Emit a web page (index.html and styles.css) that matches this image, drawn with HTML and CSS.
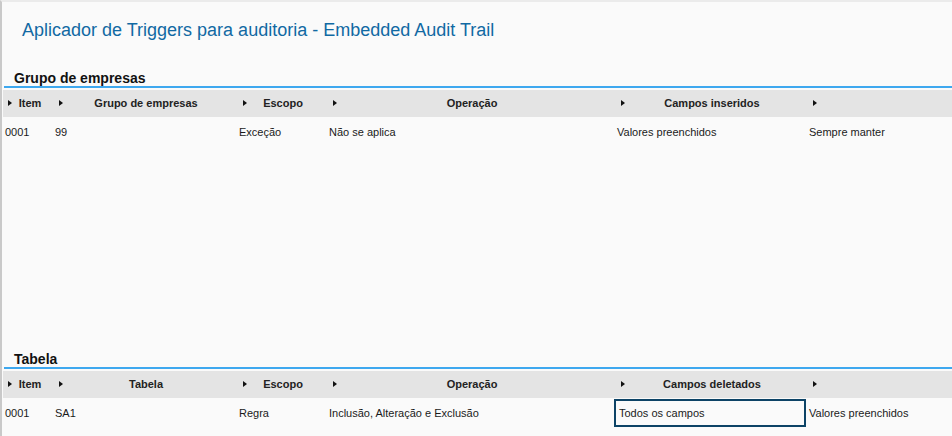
FILE: index.html
```html
<!DOCTYPE html>
<html lang="pt-BR">
<head>
<meta charset="utf-8">
<title>Embedded Audit Trail</title>
<link rel="stylesheet" href="styles.css">
</head>
<body>
<div class="app">
  <h1 class="page-title">Aplicador de Triggers para auditoria - Embedded Audit Trail</h1>

  <section class="section section-first">
    <h2 class="section-title">Grupo de empresas</h2>
    <div class="grid">
      <div class="grid-head">
        <div class="hcell"><span class="arrow"></span>Item</div>
        <div class="hcell"><span class="arrow"></span>Grupo de empresas</div>
        <div class="hcell"><span class="arrow"></span>Escopo</div>
        <div class="hcell"><span class="arrow"></span>Operação</div>
        <div class="hcell"><span class="arrow"></span>Campos inseridos</div>
        <div class="hcell"><span class="arrow"></span></div>
      </div>
      <div class="grid-row">
        <div class="cell">0001</div>
        <div class="cell">99</div>
        <div class="cell">Exceção</div>
        <div class="cell">Não se aplica</div>
        <div class="cell">Valores preenchidos</div>
        <div class="cell">Sempre manter</div>
      </div>
    </div>
  </section>

  <section class="section">
    <h2 class="section-title">Tabela</h2>
    <div class="grid">
      <div class="grid-head">
        <div class="hcell"><span class="arrow"></span>Item</div>
        <div class="hcell"><span class="arrow"></span>Tabela</div>
        <div class="hcell"><span class="arrow"></span>Escopo</div>
        <div class="hcell"><span class="arrow"></span>Operação</div>
        <div class="hcell"><span class="arrow"></span>Campos deletados</div>
        <div class="hcell"><span class="arrow"></span></div>
      </div>
      <div class="grid-row">
        <div class="cell">0001</div>
        <div class="cell">SA1</div>
        <div class="cell">Regra</div>
        <div class="cell">Inclusão, Alteração e Exclusão</div>
        <div class="cell cell-focused">Todos os campos</div>
        <div class="cell">Valores preenchidos</div>
      </div>
    </div>
  </section>
</div>
</body>
</html>
```

FILE: styles.css
```css
* { box-sizing: border-box; }

html, body {
  margin: 0;
  padding: 0;
  background: #fafafa;
}

body {
  font-family: "Liberation Sans", Arial, sans-serif;
  color: #1a1a1a;
}

.app {
  width: 952px;
  height: 436px;
  overflow: hidden;
  border-top: 2px solid #ebebeb;
  border-left: 2px solid #c9c9c9;
  background: #fafafa;
}

.page-title {
  margin: 18px 0 0 0;
  padding-left: 20px;
  font-size: 18px;
  line-height: 20px;
  font-weight: normal;
  color: #1169a3;
  white-space: nowrap;
}

.section {
  margin-left: 1px;
}

.section-first {
  margin-top: 30px;
}

.section-first .grid {
  height: 261px;
}

.section-title {
  margin: 0 0 0 1px;
  padding-left: 10px;
  font-size: 14px;
  line-height: 16px;
  font-weight: bold;
  color: #111;
  border-bottom: 2px solid #3ea8ef;
}

.grid-head,
.grid-row {
  display: grid;
  grid-template-columns: 51px 184px 90px 288px 192px 1fr;
}

.grid-head {
  margin-top: 2px;
  height: 27px;
  background: #e4e4e4;
}

.hcell {
  position: relative;
  font-size: 11px;
  line-height: 27px;
  font-weight: bold;
  color: #222;
  text-align: center;
  white-space: nowrap;
}

.hcell:first-child {
  padding-left: 3px;
}

.arrow {
  position: absolute;
  left: 5px;
  top: 10px;
  width: 0;
  height: 0;
  border-left: 4px solid #111;
  border-top: 3.5px solid transparent;
  border-bottom: 3.5px solid transparent;
}

.grid-row {
  margin-top: 1px;
  height: 28px;
}

.cell {
  font-size: 11px;
  line-height: 28px;
  padding-left: 1px;
  white-space: nowrap;
  color: #1a1a1a;
}

.cell:first-child {
  padding-left: 2px;
}

.cell-focused {
  margin-left: -2px;
  margin-right: 2px;
  border: 2px solid #0d4366;
  padding-left: 3px;
  line-height: 24px;
}
```
